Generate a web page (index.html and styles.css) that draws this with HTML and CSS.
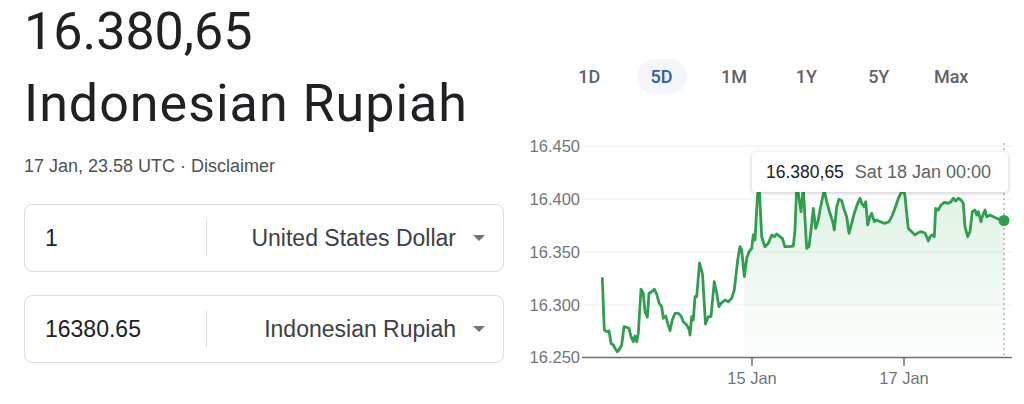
FILE: index.html
```html
<!DOCTYPE html>
<html lang="en">
<head>
<meta charset="utf-8">
<title>USD to IDR</title>
<link rel="stylesheet" href="styles.css">
</head>
<body>
<div class="page">
  <section class="converter">
    <div class="rate">16.380,65</div>
    <div class="currency-name">Indonesian Rupiah</div>
    <div class="meta">17 Jan, 23.58 UTC · Disclaimer</div>
    <div class="field">
      <div class="amount">1</div>
      <div class="divider"></div>
      <div class="currency">United States Dollar</div>
      <svg class="caret" width="12" height="6" viewBox="0 0 12 6"><path d="M0 0h12L6 6z"/></svg>
    </div>
    <div class="field field-second">
      <div class="amount">16380.65</div>
      <div class="divider"></div>
      <div class="currency">Indonesian Rupiah</div>
      <svg class="caret" width="12" height="6" viewBox="0 0 12 6"><path d="M0 0h12L6 6z"/></svg>
    </div>
  </section>
  <section class="chart-col">
    <div class="tabs">
      <div class="tab">1D</div>
      <div class="tab active"><span>5D</span></div>
      <div class="tab">1M</div>
      <div class="tab">1Y</div>
      <div class="tab">5Y</div>
      <div class="tab">Max</div>
    </div>
    <div class="chart">
      <svg class="plot" width="504" height="274" viewBox="520 130 504 274">
        <defs>
          <linearGradient id="fillGrad" x1="0" y1="0" x2="0" y2="1">
            <stop offset="0" stop-color="#34a853" stop-opacity="0.16"/>
            <stop offset="1" stop-color="#34a853" stop-opacity="0.01"/>
          </linearGradient>
        </defs>
        <g class="grid">
          <line x1="582" y1="146" x2="1012" y2="146"/>
          <line x1="582" y1="199" x2="1012" y2="199"/>
          <line x1="582" y1="252" x2="1012" y2="252"/>
          <line x1="582" y1="305" x2="1012" y2="305"/>
        </g>
        <g class="ylabels">
          <text x="580" y="152">16.450</text>
          <text x="580" y="205">16.400</text>
          <text x="580" y="258">16.350</text>
          <text x="580" y="311">16.300</text>
          <text x="580" y="363">16.250</text>
        </g>
        <polygon class="area" points="744.3,276.7 746.7,258.3 749,251.7 751.7,248.3 753.3,235 755,240 757.5,195 759.3,188 761.7,236.7 765,246.7 768.3,243.3 771.7,235 774.3,236.7 776.7,234 780,236.7 782.3,238.3 785,246.7 788.3,246.7 793.3,246 795,230 796.7,186 798.3,193.3 801,211.7 803.3,188 806.7,248.3 809,246.7 811,230 813.3,208.3 815.7,228.3 818.3,220 820,210 821.7,201.7 824.3,190 826.7,201.7 830,213.3 832.7,221.7 834.3,230 836.7,206.7 839,199.3 841.7,200.7 844.3,210 846.7,216.7 849,233.3 851.7,223.3 854.3,213.3 857.7,203.3 860,198.3 861.7,203.3 864,206.7 865.7,201.7 867.7,225 870,216.7 871.7,213.3 874.3,221.7 876.7,220 880,221.7 885,223.3 889,221.7 891.7,216.7 894.3,210 896.7,203.3 899,196.7 901.7,192 903,188 905,196 906.7,213.3 908.3,228.3 911.7,231.7 915,235 918.3,232.7 921.7,231.7 925,233.3 926.7,236.7 928.3,241 930,236.7 932.3,235 934.3,236.7 935.7,208.3 938.3,210 941,205 944.3,202.3 948.3,203.3 951,201.7 953.3,198.3 955.7,201 958.3,198.3 961,200 963.3,203.3 965,226.7 967.7,236.7 970,231.7 972.3,211.7 975,210 976.7,215 978.3,211.7 981,221.7 982.3,216.7 985,210 986.7,216.7 990,215 993.3,216.7 996.7,218.3 1000,219.3 1004,220.5 1004,357 744.3,357"/>
        <line class="cursor" x1="1004" y1="143" x2="1004" y2="357"/>
        <line class="axis" x1="582" y1="357.5" x2="1012" y2="357.5"/>
        <line class="axis" x1="752" y1="357.5" x2="752" y2="366"/>
        <line class="axis" x1="904" y1="357.5" x2="904" y2="366"/>
        <g class="xlabels">
          <text x="752" y="384">15 Jan</text>
          <text x="904" y="384">17 Jan</text>
        </g>
        <polyline class="line" points="602.3,278.3 604.3,330 606.7,331.7 609,331 610,336.7 611,343.3 613.3,345 615,348.3 617.3,351.7 619,350 621.7,345 624,326.7 626.7,327.3 629,328.3 631,336.7 633.3,341.7 635,336 636.7,341.7 638.3,333.3 641,289.3 643.3,293.3 645,311.7 647.3,317.3 649,293.3 651.7,291.7 654.3,289.3 656.7,294 659,302.7 661.7,306.7 663.3,318.3 665.7,316 667.7,323.3 670,330.7 672.3,320 675,313.3 678.3,313.3 681,316 683.3,321.7 686.7,325 689.3,330 690,335 691.7,316.7 693.3,320 695,296.7 696.7,296.7 699.5,263 702.5,274 705.5,324 708.3,316.7 711,316.7 714.3,281.7 716.7,293.3 719,306.7 721,303.3 725,300 728.3,301.7 731.7,298.3 734.3,290 737.7,260 740,246.7 741.7,250 744.3,276.7 746.7,258.3 749,251.7 751.7,248.3 753.3,235 755,240 757.5,195 759.3,188 761.7,236.7 765,246.7 768.3,243.3 771.7,235 774.3,236.7 776.7,234 780,236.7 782.3,238.3 785,246.7 788.3,246.7 793.3,246 795,230 796.7,186 798.3,193.3 801,211.7 803.3,188 806.7,248.3 809,246.7 811,230 813.3,208.3 815.7,228.3 818.3,220 820,210 821.7,201.7 824.3,190 826.7,201.7 830,213.3 832.7,221.7 834.3,230 836.7,206.7 839,199.3 841.7,200.7 844.3,210 846.7,216.7 849,233.3 851.7,223.3 854.3,213.3 857.7,203.3 860,198.3 861.7,203.3 864,206.7 865.7,201.7 867.7,225 870,216.7 871.7,213.3 874.3,221.7 876.7,220 880,221.7 885,223.3 889,221.7 891.7,216.7 894.3,210 896.7,203.3 899,196.7 901.7,192 903,188 905,196 906.7,213.3 908.3,228.3 911.7,231.7 915,235 918.3,232.7 921.7,231.7 925,233.3 926.7,236.7 928.3,241 930,236.7 932.3,235 934.3,236.7 935.7,208.3 938.3,210 941,205 944.3,202.3 948.3,203.3 951,201.7 953.3,198.3 955.7,201 958.3,198.3 961,200 963.3,203.3 965,226.7 967.7,236.7 970,231.7 972.3,211.7 975,210 976.7,215 978.3,211.7 981,221.7 982.3,216.7 985,210 986.7,216.7 990,215 993.3,216.7 996.7,218.3 1000,219.3 1004,220.5"/>
        <circle class="dot" cx="1004" cy="220.5" r="5.5"/>
      </svg>
      <div class="tooltip"><span class="tip-value">16.380,65</span><span class="tip-date">Sat 18 Jan 00:00</span></div>
    </div>
  </section>
</div>
</body>
</html>
```
FILE: styles.css
```css
* { box-sizing: border-box; }
html, body { margin: 0; padding: 0; background: #fff; }
body { font-family: "Liberation Sans", Arial, sans-serif; color: #202124; }

.page {
  display: flex;
  width: 1024px;
  height: 404px;
  overflow: hidden;
}

.converter {
  width: 504px;
  padding-left: 24px;
  flex-shrink: 0;
}

.rate, .currency-name {
  font-family: Roboto, "Liberation Sans", sans-serif;
  font-size: 52px;
  line-height: 60px;
  color: #202124;
  white-space: nowrap;
}
.rate { margin-top: 2px; }
.currency-name { margin-top: 12px; letter-spacing: 1px; }

.meta {
  margin-top: 20px;
  font-size: 18px;
  line-height: 24px;
  color: #4d5156;
}

.field {
  display: flex;
  align-items: center;
  width: 480px;
  height: 68px;
  margin-top: 26px;
  border: 1px solid #dadce0;
  border-radius: 8px;
  font-size: 23px;
}
.field-second { margin-top: 23px; }

.amount {
  width: 181px;
  padding-left: 20px;
  color: #202124;
}
.divider {
  width: 1px;
  height: 36px;
  background: #dadce0;
}
.currency {
  flex: 1;
  text-align: right;
  color: #3c4043;
  white-space: nowrap;
}
.caret {
  margin-left: 17px;
  margin-right: 18px;
  fill: #757575;
  flex-shrink: 0;
}

.chart-col {
  width: 504px;
  margin-left: 16px;
  flex-shrink: 0;
}

.tabs {
  display: grid;
  grid-template-columns: repeat(6, 72.4px);
  margin-top: 59px;
  padding-left: 33px;
  height: 35px;
}
.tab {
  display: flex;
  align-items: center;
  justify-content: center;
  font-family: Roboto, "Liberation Sans", sans-serif;
  font-weight: 500;
  font-size: 18px;
  color: #5f6368;
}
.tab.active span {
  display: flex;
  align-items: center;
  justify-content: center;
  width: 50px;
  height: 35px;
  border-radius: 18px;
  background: #f3f6fa;
  color: #2b5da8;
}

.chart {
  position: relative;
  margin-top: 36px;
  width: 504px;
  height: 274px;
}
.plot { display: block; }

.grid line { stroke: #eeeeee; stroke-width: 1; }
.ylabels text {
  font-family: "Liberation Sans", Arial, sans-serif;
  font-size: 16.5px;
  fill: #70757a;
  text-anchor: end;
}
.xlabels text {
  font-family: "Liberation Sans", Arial, sans-serif;
  font-size: 16.5px;
  fill: #70757a;
  text-anchor: middle;
}
.axis { stroke: #6f6f6f; stroke-width: 1.5; }
.cursor { stroke: #9aa0a6; stroke-width: 1.2; stroke-dasharray: 2 3; }
.area { fill: url(#fillGrad); stroke: none; }
.line {
  fill: none;
  stroke: #2f9e4f;
  stroke-width: 2.8;
  stroke-linejoin: round;
  stroke-linecap: round;
}
.dot { fill: #2f9e4f; }

.tooltip {
  position: absolute;
  left: 232px;
  top: 22px;
  width: 256px;
  height: 40px;
  display: flex;
  align-items: center;
  padding-left: 14px;
  background: #fff;
  border-radius: 4px;
  box-shadow: 0 1px 4px rgba(0, 0, 0, 0.22);
  font-size: 17.5px;
  white-space: nowrap;
}
.tip-value { color: #202124; }
.tip-date { color: #5f6368; margin-left: 11px; font-size: 18px; }
```
